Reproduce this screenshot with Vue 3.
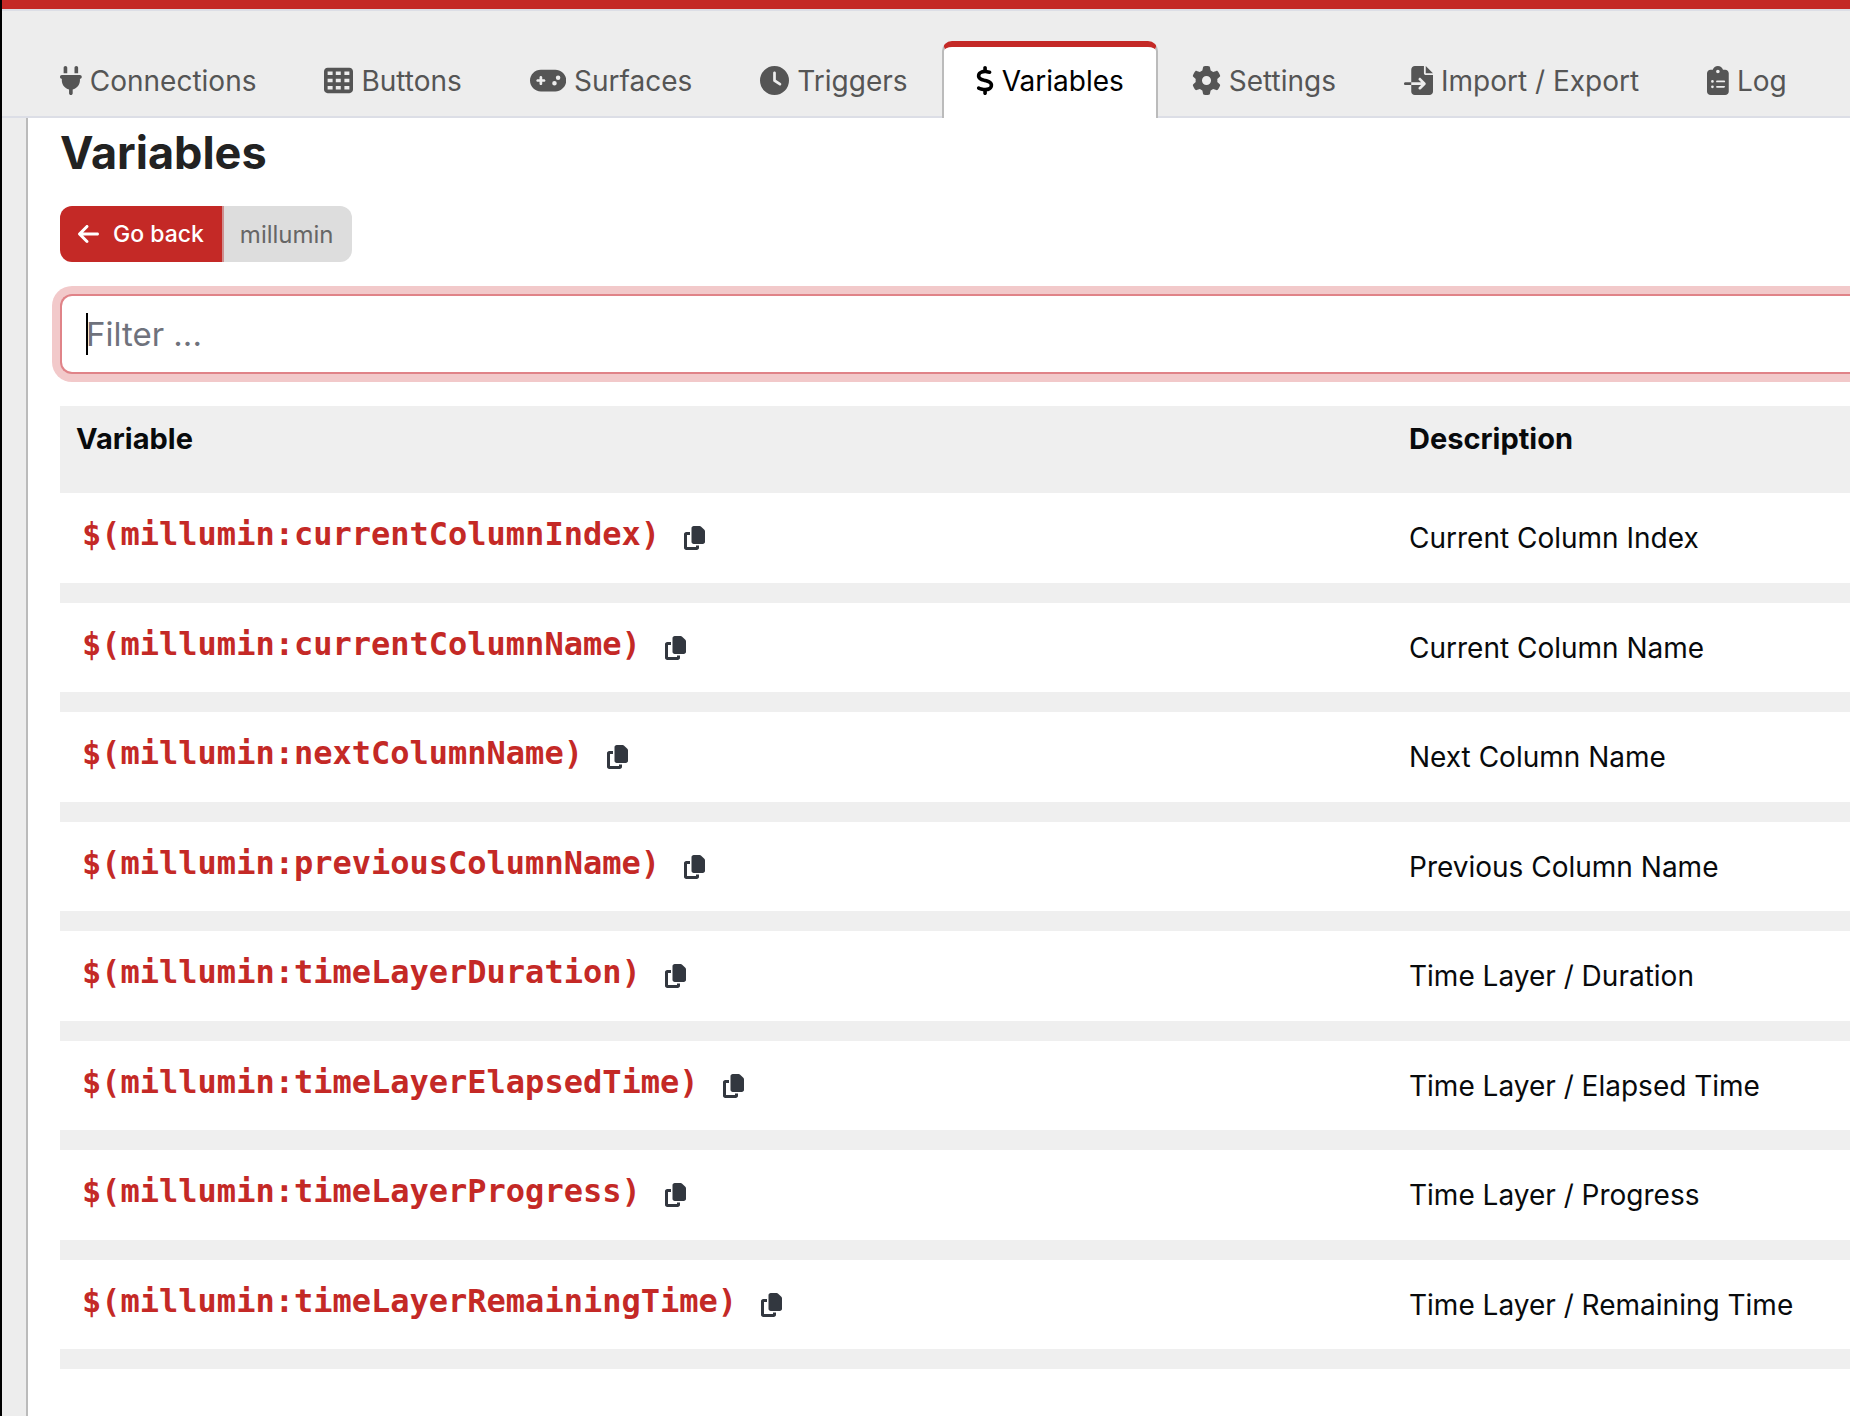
<script setup>
import { ref, computed } from 'vue'

const tabs = [
  {
    label: 'Connections',
    width: 384,
    path: 'M96 0C78.3 0 64 14.3 64 32v96h64V32c0-17.7-14.3-32-32-32zM288 0c-17.7 0-32 14.3-32 32v96h64V32c0-17.7-14.3-32-32-32zM32 160c-17.7 0-32 14.3-32 32s14.3 32 32 32v32c0 77.4 55 142 128 156.8V480c0 17.7 14.3 32 32 32s32-14.3 32-32V412.8C297 398 352 333.4 352 256V224c17.7 0 32-14.3 32-32s-14.3-32-32-32H32z',
  },
  {
    label: 'Buttons',
    width: 512,
    path: 'M64 32C28.7 32 0 60.7 0 96V416c0 35.3 28.7 64 64 64H448c35.3 0 64-28.7 64-64V96c0-35.3-28.7-64-64-64H64zm88 64v64H64V96h88zm56 0h88v64H208V96zm240 0v64H360V96h88zM64 224h88v64H64V224zm232 0v64H208V224h88zm64 0h88v64H360V224zM152 352v64H64V352h88zm56 0h88v64H208V352zm240 0v64H360V352h88z',
  },
  {
    label: 'Surfaces',
    width: 640,
    path: 'M192 64C86 64 0 150 0 256S86 448 192 448H448c106 0 192-86 192-192s-86-192-192-192H192zM496 168a40 40 0 1 1 0 80 40 40 0 1 1 0-80zM392 304a40 40 0 1 1 80 0 40 40 0 1 1 -80 0zM168 200c0-13.3 10.7-24 24-24s24 10.7 24 24v32h32c13.3 0 24 10.7 24 24s-10.7 24-24 24H216v32c0 13.3-10.7 24-24 24s-24-10.7-24-24V280H136c-13.3 0-24-10.7-24-24s10.7-24 24-24h32V200z',
  },
  {
    label: 'Triggers',
    width: 512,
    path: 'M256 0a256 256 0 1 1 0 512A256 256 0 1 1 256 0zM232 120V256c0 8 4 15.5 10.7 20l96 64c11 7.4 25.9 4.4 33.3-6.7s4.4-25.9-6.7-33.3L280 243.2V120c0-13.3-10.7-24-24-24s-24 10.7-24 24z',
  },
  {
    label: 'Variables',
    width: 320,
    path: 'M160 0c17.7 0 32 14.3 32 32V67.7c1.6 .2 3.1 .4 4.7 .7c.4 .1 .7 .1 1.1 .2l48 8.8c17.4 3.2 28.9 19.9 25.7 37.2s-19.9 28.9-37.2 25.7l-47.5-8.7c-31.3-4.6-58.9-1.5-78.3 6.2s-27.2 18.3-29 28.1c-2 10.7-.5 16.7 1.2 20.4c1.8 3.9 5.5 8.3 12.8 13.2c16.3 10.7 41.3 17.7 73.7 26.3l2.9 .8c28.6 7.6 63.6 16.8 89.6 33.8c14.2 9.3 27.6 21.9 35.9 39.5c8.5 17.9 10.3 37.9 6.4 59.2c-6.9 38-33.1 63.4-65.6 76.7c-13.7 5.6-28.6 9.2-44.4 11V480c0 17.7-14.3 32-32 32s-32-14.3-32-32V445.1c-.4-.1-.9-.1-1.3-.2l-.2 0 0 0c-24.4-3.8-64.5-14.3-91.5-26.3c-16.1-7.2-23.4-26.1-16.2-42.2s26.1-23.4 42.2-16.2c20.9 9.3 55.3 18.5 75.2 21.6c31.9 4.7 58.2 2 76-5.3c16.9-6.9 24.6-16.9 26.8-28.9c1.9-10.6 .4-16.7-1.3-20.4c-1.9-4-5.6-8.4-13-13.3c-16.4-10.7-41.5-17.7-74-26.3l-2.8-.7 0 0C119.4 279.3 84.4 270 58.4 253c-14.2-9.3-27.5-22-35.8-39.6c-8.4-17.9-10.1-37.9-6.1-59.2C23.7 116 52.3 91.2 84.8 78.3c13.3-5.3 27.9-8.9 43.2-11V32c0-17.7 14.3-32 32-32z',
  },
  {
    label: 'Settings',
    width: 512,
    path: 'M495.9 166.6c3.2 8.7 .5 18.4-6.4 24.6l-43.3 39.4c1.1 8.3 1.7 16.8 1.7 25.4s-.6 17.1-1.7 25.4l43.3 39.4c6.9 6.2 9.6 15.9 6.4 24.6c-4.4 11.9-9.7 23.3-15.8 34.3l-4.7 8.1c-6.6 11-14 21.4-22.1 31.2c-5.9 7.2-15.7 9.6-24.5 6.8l-55.7-17.7c-13.4 10.3-28.2 18.9-44 25.4l-12.5 57.1c-2 9.1-9 16.3-18.2 17.8c-13.8 2.3-28 3.5-42.5 3.5s-28.7-1.2-42.5-3.5c-9.2-1.5-16.2-8.7-18.2-17.8l-12.5-57.1c-15.8-6.5-30.6-15.1-44-25.4L83.1 425.9c-8.8 2.8-18.6 .3-24.5-6.8c-8.1-9.8-15.5-20.2-22.1-31.2l-4.7-8.1c-6.1-11-11.4-22.4-15.8-34.3c-3.2-8.7-.5-18.4 6.4-24.6l43.3-39.4C64.6 273.1 64 264.6 64 256s.6-17.1 1.7-25.4L22.4 191.2c-6.9-6.2-9.6-15.9-6.4-24.6c4.4-11.9 9.7-23.3 15.8-34.3l4.7-8.1c6.6-11 14-21.4 22.1-31.2c5.9-7.2 15.7-9.6 24.5-6.8l55.7 17.7c13.4-10.3 28.2-18.9 44-25.4l12.5-57.1c2-9.1 9-16.3 18.2-17.8C227.3 1.2 241.5 0 256 0s28.7 1.2 42.5 3.5c9.2 1.5 16.2 8.7 18.2 17.8l12.5 57.1c15.8 6.5 30.6 15.1 44 25.4l55.7-17.7c8.8-2.8 18.6-.3 24.5 6.8c8.1 9.8 15.5 20.2 22.1 31.2l4.7 8.1c6.1 11 11.4 22.4 15.8 34.3zM256 336a80 80 0 1 0 0-160 80 80 0 1 0 0 160z',
  },
  {
    label: 'Import / Export',
    width: 512,
    path: 'M128 64c0-35.3 28.7-64 64-64H352V128c0 17.7 14.3 32 32 32H512V448c0 35.3-28.7 64-64 64H192c-35.3 0-64-28.7-64-64V336H302.1l-39 39c-9.4 9.4-9.4 24.6 0 33.9s24.6 9.4 33.9 0l80-80c9.4-9.4 9.4-24.6 0-33.9l-80-80c-9.4-9.4-24.6-9.4-33.9 0s-9.4 24.6 0 33.9l39 39H128V64zm0 224v48H24c-13.3 0-24-10.7-24-24s10.7-24 24-24H128zM512 128H384V0L512 128z',
  },
  {
    label: 'Log',
    width: 384,
    path: 'M192 0c-41.8 0-77.4 26.7-90.5 64H64C28.7 64 0 92.7 0 128V448c0 35.3 28.7 64 64 64H320c35.3 0 64-28.7 64-64V128c0-35.3-28.7-64-64-64H282.5C269.4 26.7 233.8 0 192 0zm0 64a32 32 0 1 1 0 64 32 32 0 1 1 0-64zM72 272a24 24 0 1 1 48 0 24 24 0 1 1 -48 0zm104-16H304c8.8 0 16 7.2 16 16s-7.2 16-16 16H176c-8.8 0-16-7.2-16-16s7.2-16 16-16zM72 368a24 24 0 1 1 48 0 24 24 0 1 1 -48 0zm88 0c0-8.8 7.2-16 16-16H304c8.8 0 16 7.2 16 16s-7.2 16-16 16H176c-8.8 0-16-7.2-16-16z',
  },
]

const variables = [
  { name: 'currentColumnIndex', description: 'Current Column Index' },
  { name: 'currentColumnName', description: 'Current Column Name' },
  { name: 'nextColumnName', description: 'Next Column Name' },
  { name: 'previousColumnName', description: 'Previous Column Name' },
  { name: 'timeLayerDuration', description: 'Time Layer / Duration' },
  { name: 'timeLayerElapsedTime', description: 'Time Layer / Elapsed Time' },
  { name: 'timeLayerProgress', description: 'Time Layer / Progress' },
  { name: 'timeLayerRemainingTime', description: 'Time Layer / Remaining Time' },
]

const activeTab = ref('Variables')
const filter = ref('')

const visibleVariables = computed(() => {
  const term = filter.value.toLowerCase()
  return variables.filter(
    (v) => v.name.toLowerCase().includes(term) || v.description.toLowerCase().includes(term),
  )
})
</script>

<template>
  <div class="app">
    <nav class="tabs">
      <a
        v-for="tab in tabs"
        :key="tab.label"
        href="#"
        class="tab"
        :class="{ active: tab.label === activeTab }"
        @click.prevent="activeTab = tab.label"
      >
        <svg class="tab-icon" :viewBox="`0 0 ${tab.width} 512`" aria-hidden="true">
          <path :d="tab.path" />
        </svg>
        <span>{{ tab.label }}</span>
      </a>
    </nav>

    <main class="panel">
      <h1 class="title">Variables</h1>

      <div class="button-group">
        <button type="button" class="back">
          <svg class="small-icon" viewBox="0 0 448 512" aria-hidden="true">
            <path d="M9.4 233.4c-12.5 12.5-12.5 32.8 0 45.3l160 160c12.5 12.5 32.8 12.5 45.3 0s12.5-32.8 0-45.3L109.2 288 416 288c17.7 0 32-14.3 32-32s-14.3-32-32-32l-306.7 0L214.6 118.6c12.5-12.5 12.5-32.8 0-45.3s-32.8-12.5-45.3 0l-160 160z" />
          </svg>
          <span>Go back</span>
        </button>
        <button type="button" class="connection" disabled>millumin</button>
      </div>

      <div class="filter">
        <input v-model="filter" class="filter-input" type="text" placeholder="Filter ..." aria-label="Filter" />
        <span class="caret" aria-hidden="true"></span>
      </div>

      <table class="variables">
        <colgroup>
          <col />
          <col class="description-col" />
        </colgroup>
        <thead>
          <tr>
            <th scope="col">Variable</th>
            <th scope="col">Description</th>
          </tr>
        </thead>
        <tbody>
          <tr v-for="v in visibleVariables" :key="v.name">
            <td>
              <div class="name">
                <code>$(millumin:{{ v.name }})</code>
                <button type="button" class="copy" aria-label="Copy variable name">
                  <svg class="small-icon" viewBox="0 0 448 512" aria-hidden="true">
                    <path d="M208 0H332.1c12.7 0 24.9 5.1 33.9 14.1l67.9 67.9c9 9 14.1 21.2 14.1 33.9V336c0 26.5-21.5 48-48 48H208c-26.5 0-48-21.5-48-48V48c0-26.5 21.5-48 48-48zM48 128h80v64H64V448H256V416h64v48c0 26.5-21.5 48-48 48H48c-26.5 0-48-21.5-48-48V176c0-26.5 21.5-48 48-48z" />
                  </svg>
                </button>
              </div>
            </td>
            <td>{{ v.description }}</td>
          </tr>
        </tbody>
      </table>
    </main>
  </div>
</template>

<style>
body {
  margin: 0;
  background: #ededed;
}
</style>

<style scoped>
.app {
  box-sizing: border-box;
  display: flex;
  flex-direction: column;
  min-height: 100vh;
  overflow: hidden;
  border-left: 2px solid #000;
  background: #ededed;
  font-family: Inter, "Liberation Sans", sans-serif;
  font-size: 28px;
  line-height: 42px;
  color: #080a0c;
}

svg {
  fill: currentColor;
}

.tabs {
  display: flex;
  align-items: flex-end;
  height: 109px;
  padding-left: 24px;
  border-top: 9px solid #c42926;
  box-shadow: inset 0 2px #dcdee6, inset 0 -2px #dcdee6;
}

.tab {
  box-sizing: border-box;
  display: flex;
  align-items: center;
  gap: 8px;
  height: 77px;
  padding: 0 32px 4px;
  border: 2px solid transparent;
  border-top-width: 6px;
  border-bottom: 0;
  border-radius: 10px 10px 0 0;
  color: #555;
  text-decoration: none;
  white-space: nowrap;
}

.tab.active {
  border-color: #c42926 #bbb transparent;
  background: #fff;
  color: #000;
}

.tab-icon {
  flex: none;
  height: 29px;
}

.panel {
  flex: 1;
  margin-left: 24px;
  padding: 8px 0 32px 32px;
  border-left: 2px solid #bbb;
  background: #fff;
}

.title {
  margin: 0 0 26px;
  font-size: 45px;
  line-height: 54px;
  font-weight: 700;
  color: #222;
}

.button-group {
  display: flex;
  height: 56px;
  margin-bottom: 32px;
}

.button-group button {
  padding: 0 18px 0 16px;
  border: 0;
  font-family: inherit;
  font-size: 24px;
}

.button-group .back {
  display: flex;
  align-items: center;
  gap: 14px;
  padding: 0 18px;
  border-radius: 12px 0 0 12px;
  background: #c42926;
  color: #fff;
  font-size: 23px;
  font-weight: 500;
}

.button-group .connection {
  border-left: 2px solid #cf8f90;
  border-radius: 0 12px 12px 0;
  background: #ddd;
  color: #666;
}

.small-icon {
  display: block;
  width: 21px;
  height: 24px;
}

.filter {
  position: relative;
  margin-bottom: 32px;
}

.filter-input {
  box-sizing: border-box;
  display: block;
  width: 100%;
  height: 80px;
  padding: 0 24px;
  border: 2px solid #e08388;
  border-right: 0;
  border-radius: 12px 0 0 12px;
  outline: 0;
  box-shadow: 0 0 0 8px #f2c9ca;
  font-family: inherit;
  font-size: 33px;
  color: #333;
}

.filter-input::placeholder {
  color: #6f727c;
  opacity: 1;
}

.caret {
  position: absolute;
  top: 19px;
  left: 26px;
  width: 2px;
  height: 42px;
  background: #000;
}

.variables {
  width: 100%;
  table-layout: fixed;
  border-spacing: 0;
}

.description-col {
  width: 457px;
}

th {
  box-sizing: border-box;
  height: 87px;
  padding: 12px 16px 0;
  background: #efefef;
  font-size: 29px;
  font-weight: 700;
  text-align: left;
  vertical-align: top;
}

td {
  box-sizing: border-box;
  height: 109px;
  padding: 24px 16px 0;
  border-bottom: 20px solid #efefef;
  vertical-align: top;
}

tbody tr:nth-child(odd) td {
  height: 110px;
}

.name {
  display: flex;
  align-items: center;
  gap: 24px;
  padding-left: 6px;
}

code {
  font-family: "DejaVu Sans Mono", monospace;
  font-size: 32px;
  font-weight: 700;
  line-height: 34px;
  color: #c42926;
}

.copy {
  padding: 8px 0 0;
  border: 0;
  background: none;
  color: #32373f;
}
</style>
